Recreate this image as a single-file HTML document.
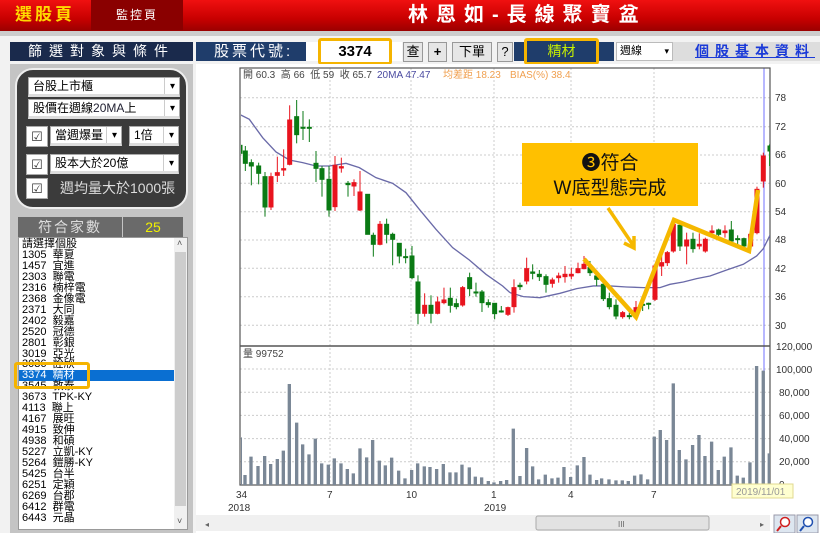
<!DOCTYPE html>
<html><head><meta charset="utf-8">
<style>
*{margin:0;padding:0;box-sizing:border-box}
body{width:820px;height:533px;overflow:hidden;background:#f2f2f2;font-family:"Liberation Sans","Noto Sans CJK TC",sans-serif;position:relative}
.a{position:absolute}
.hdr{left:0;top:0;width:820px;height:31px;background:linear-gradient(#f01010,#c80000 60%,#9a0000)}
.sel{font-size:12px;background:#fff;border:1px solid #aaa;border-bottom:3px solid #ddd;height:20px;line-height:17px;padding-left:4px;color:#000}
.sel:after{content:"▾";position:absolute;right:4px;top:0;font-size:10px}
.sel b{position:absolute;right:14px;top:0;bottom:0;border-left:1px solid #ccc}
.cb{background:#fff;border:1px solid #aaa;width:22px;height:21px;text-align:center;font-size:13px;line-height:19px;color:#333}
.btn{background:#e6e6e6;border:1px solid #999;font-size:13px;text-align:center;line-height:18px;height:20px;top:42px}
.list div{height:10.96px;line-height:11px;font-size:11px;padding-left:3px;white-space:nowrap}
</style></head><body>
<div class="a hdr"></div>
<div class="a" style="left:0;top:0;width:90px;height:30px;color:#ffd800;font-weight:bold;font-size:17px;text-align:center;line-height:30px;letter-spacing:3px">選股頁</div>
<div class="a" style="left:91px;top:0;width:92px;height:30px;background:#8a0000;color:#fff;font-size:12px;text-align:center;line-height:30px;letter-spacing:2px">監控頁</div>
<div class="a" style="left:408px;top:3px;width:260px;color:#fff;font-weight:bold;font-size:20px;line-height:24px;letter-spacing:8px">林恩如-長線聚寶盆</div>
<div class="a" style="left:0;top:31px;width:820px;height:5px;background:#ccc"></div>

<div class="a" style="left:10px;top:42px;width:183px;height:19px;background:#1a2a4c;color:#fff;font-size:14px;text-align:center;line-height:19px;letter-spacing:7px">篩選對象與條件</div>
<div class="a" style="left:196px;top:42px;width:110px;height:19px;background:#1f3d6b;color:#fff;font-size:15px;line-height:19px;padding-left:18px;letter-spacing:3px">股票代號:</div>
<div class="a" style="left:306px;top:42px;width:96px;height:19px;background:#fff"></div>
<div class="a" style="left:318px;top:38px;width:74px;height:27px;border:3px solid #f5b400;border-radius:3px;background:#fff;text-align:center;font-size:15px;font-weight:bold;line-height:21px">3374</div>
<div class="a btn" style="left:403px;width:20px">查</div>
<div class="a btn" style="left:428px;width:19px;font-weight:bold">+</div>
<div class="a btn" style="left:452px;width:40px">下單</div>
<div class="a btn" style="left:497px;width:16px">?</div>
<div class="a" style="left:514px;top:42px;width:100px;height:19px;background:#1f3d6b"></div>
<div class="a" style="left:524px;top:38px;width:75px;height:27px;border:3px solid #f5b400;border-radius:3px;background:#1f3d6b;color:#c8f000;text-align:center;font-size:14px;line-height:21px">精材</div>
<div class="a" style="left:616px;top:42px;width:57px;height:19px;background:#fff;border:1px solid #bbb;font-size:11px;line-height:16px;padding-left:3px">週線<span style="position:absolute;right:3px;font-size:9px">▾</span></div>
<div class="a" style="left:673px;top:42px;width:147px;height:19px;background:#ddd"></div>
<div class="a" style="left:695px;top:42px;color:#1a3ad8;font-size:14px;text-decoration:underline;letter-spacing:6px;line-height:19px;font-weight:bold">個股基本資料</div>

<div class="a" style="left:10px;top:64px;width:183px;height:469px;background:#c4c4c4"></div>
<div class="a" style="left:15px;top:68px;width:173px;height:141px;background:#3b3b3b;border:2px solid #eee;border-radius:18px"></div>
<div class="a sel" style="left:28px;top:77px;width:152px">台股上市櫃<b></b></div>
<div class="a sel" style="left:28px;top:99px;width:152px">股價在週線<span style="color:#223">20MA</span>上<b></b></div>
<div class="a cb" style="left:26px;top:126px">☑</div>
<div class="a sel" style="left:50px;top:126px;width:72px">當週爆量<b></b></div>
<div class="a sel" style="left:129px;top:126px;width:50px">1倍<b></b></div>
<div class="a cb" style="left:26px;top:154px">☑</div>
<div class="a sel" style="left:50px;top:154px;width:129px">股本大於20億<b></b></div>
<div class="a cb" style="left:26px;top:178px">☑</div>
<div class="a" style="left:60px;top:177px;color:#ddd;font-size:14px;line-height:22px">週均量大於1000張</div>
<div class="a" style="left:18px;top:217px;width:104px;height:20px;background:#6a6a6a;color:#ddd;font-size:14px;text-align:center;line-height:20px;letter-spacing:2px">符合家數</div>
<div class="a" style="left:123px;top:217px;width:60px;height:20px;background:#6a6a6a;color:#f0f000;font-size:14px;text-align:center;line-height:20px">25</div>
<div class="a" style="left:18px;top:237px;width:170px;height:293px;background:#fff;border:1px solid #999"></div>
<div class="a" style="left:174px;top:238px;width:13px;height:291px;background:#f0f0f0"></div>
<div class="a" style="left:175px;top:252px;width:11px;height:254px;background:#cdcdcd"></div>
<div class="a" style="left:177px;top:238px;font-size:9px;color:#555">˄</div>
<div class="a" style="left:177px;top:516px;font-size:9px;color:#555">˅</div>
<div class="a" style="left:19px;top:370px;width:155px;height:11px;background:#0a6fd2"></div>
<div class="a list" style="left:19px;top:239px;width:155px">
<div>請選擇個股</div><div>1305&nbsp; 華夏</div><div>1457&nbsp; 宜進</div><div>2303&nbsp; 聯電</div><div>2316&nbsp; 楠梓電</div><div>2368&nbsp; 金像電</div><div>2371&nbsp; 大同</div><div>2402&nbsp; 毅嘉</div><div>2520&nbsp; 冠德</div><div>2801&nbsp; 彰銀</div><div>3019&nbsp; 亞光</div><div>3036&nbsp; 詮欣</div><div style="color:#fff">3374&nbsp; 精材</div><div>3545&nbsp; 敦泰</div><div>3673&nbsp; TPK-KY</div><div>4113&nbsp; 聯上</div><div>4167&nbsp; 展旺</div><div>4915&nbsp; 致伸</div><div>4938&nbsp; 和碩</div><div>5227&nbsp; 立凱-KY</div><div>5264&nbsp; 鎧勝-KY</div><div>5425&nbsp; 台半</div><div>6251&nbsp; 定穎</div><div>6269&nbsp; 台郡</div><div>6412&nbsp; 群電</div><div>6443&nbsp; 元晶</div>
</div>
<div class="a" style="left:14px;top:362px;width:76px;height:27px;border:3px solid #f5b400;border-radius:3px"></div>

<div class="a" style="left:196px;top:64px;width:624px;height:469px;background:#fff"></div>
<svg class="a" style="left:0;top:0" width="820" height="533" viewBox="0 0 820 533">
<defs><clipPath id="cc"><rect x="241" y="68" width="529" height="417"/></clipPath></defs>
<g stroke="#ccc" stroke-dasharray="2,2" stroke-width="1">
<line x1="240" x2="770" y1="97.7" y2="97.7"/><line x1="240" x2="770" y1="126.7" y2="126.7"/><line x1="240" x2="770" y1="155" y2="155"/><line x1="240" x2="770" y1="183.3" y2="183.3"/><line x1="240" x2="770" y1="211.7" y2="211.7"/><line x1="240" x2="770" y1="240" y2="240"/><line x1="240" x2="770" y1="268.3" y2="268.3"/><line x1="240" x2="770" y1="296.7" y2="296.7"/><line x1="240" x2="770" y1="325.3" y2="325.3"/>
<line x1="240" x2="770" y1="461.8" y2="461.8"/><line x1="240" x2="770" y1="438.6" y2="438.6"/><line x1="240" x2="770" y1="415.4" y2="415.4"/><line x1="240" x2="770" y1="392.2" y2="392.2"/><line x1="240" x2="770" y1="369" y2="369"/>
<line x1="330" x2="330" y1="68" y2="485"/><line x1="411" x2="411" y1="68" y2="485"/><line x1="494" x2="494" y1="68" y2="485"/><line x1="571" x2="571" y1="68" y2="485"/><line x1="654" x2="654" y1="68" y2="485"/>
</g>
<line x1="764" x2="764" y1="68" y2="485" stroke="#7070ff" stroke-width="1"/>
<rect x="240" y="68" width="530" height="417" fill="none" stroke="#555" stroke-width="1.2"/>
<line x1="240" x2="770" y1="346" y2="346" stroke="#555" stroke-width="1.5"/>
<g font-size="10" fill="#333" font-family="Liberation Sans,sans-serif">
<text x="775" y="101">78</text><text x="775" y="130">72</text><text x="775" y="158">66</text><text x="775" y="187">60</text><text x="775" y="215">54</text><text x="775" y="243">48</text><text x="775" y="272">42</text><text x="775" y="300">36</text><text x="775" y="329">30</text>
<text x="776" y="350">120,000</text><text x="776" y="373">100,000</text><text x="779" y="396">80,000</text><text x="779" y="419">60,000</text><text x="779" y="442">40,000</text><text x="779" y="465">20,000</text><text x="779" y="488">0</text>
<text x="236" y="498">34</text><text x="228" y="511">2018</text><text x="327" y="498">7</text><text x="406" y="498">10</text><text x="491" y="498">1</text><text x="484" y="511">2019</text><text x="568" y="498">4</text><text x="651" y="498">7</text>
<text x="243" y="78" fill="#444">開 60.3&nbsp; 高 66&nbsp; 低 59&nbsp; 收 65.7</text>
<text x="377" y="78" fill="#4a4aa0">20MA 47.47</text>
<text x="443" y="78" fill="#f0a050">均差距 18.23</text>
<text x="510" y="78" fill="#f0a050">BIAS(%) 38.4</text>
<text x="243" y="357" fill="#444">量 99752</text>
</g>
<g clip-path="url(#cc)">
<path transform="translate(236,66) scale(0.3333)" d="M0,140 L40,160 L80,215 L120,258 L160,282 L200,290 L240,300 L280,300 L330,292 L370,305 L420,335 L470,352 L510,380 L550,430 L600,490 L650,545 L700,582 L750,625 L800,660 L822,680" fill="none" stroke="#6a6aa8" stroke-width="4"/>
<path transform="translate(510,66) scale(0.3333)" d="M0,680 L40,692 L90,695 L150,682 L200,668 L250,660 L300,660 L350,663 L400,665 L450,665 L480,655 L520,648 L560,638 L600,630 L650,612 L700,595 L740,570 L760,548 L780,508" fill="none" stroke="#6a6aa8" stroke-width="4"/>
<g transform="translate(236,66) scale(0.3333)" stroke-width="3">
<g fill="#0a7a14" stroke="#0a7a14">
<line x1="12" x2="12" y1="238" y2="280"/><rect x="12" y="238" width="6" height="24"/>
<line x1="28" x2="28" y1="240" y2="315"/><rect x="22" y="255" width="12" height="37"/>
<line x1="46" x2="46" y1="280" y2="358"/><rect x="40" y="290" width="12" height="10"/>
<line x1="68" x2="68" y1="290" y2="355"/><rect x="62" y="300" width="12" height="22"/>
<line x1="87" x2="87" y1="318" y2="452"/><rect x="81" y="332" width="12" height="91"/>
<line x1="182" x2="182" y1="102" y2="232"/><rect x="176" y="152" width="12" height="54"/>
<line x1="201" x2="201" y1="135" y2="222"/><rect x="195" y="184" width="12" height="3"/>
<line x1="220" x2="220" y1="160" y2="228"/><rect x="214" y="184" width="12" height="3"/>
<line x1="240" x2="240" y1="255" y2="348"/><rect x="234" y="292" width="12" height="15"/>
<line x1="258" x2="258" y1="300" y2="392"/><rect x="252" y="308" width="12" height="32"/>
<line x1="279" x2="279" y1="300" y2="452"/><rect x="273" y="340" width="12" height="92"/>
<line x1="336" x2="336" y1="345" y2="392"/><rect x="330" y="352" width="12" height="4"/>
<line x1="395" x2="395" y1="385" y2="505"/><rect x="389" y="385" width="12" height="120"/>
<line x1="412" x2="412" y1="500" y2="572"/><rect x="406" y="508" width="12" height="27"/>
<line x1="452" x2="452" y1="458" y2="532"/><rect x="446" y="475" width="12" height="30"/>
<line x1="470" x2="470" y1="500" y2="598"/><rect x="464" y="505" width="12" height="15"/>
<line x1="490" x2="490" y1="532" y2="592"/><rect x="484" y="532" width="12" height="38"/>
<line x1="509" x2="509" y1="548" y2="592"/><rect x="503" y="572" width="12" height="3"/>
<line x1="528" x2="528" y1="540" y2="640"/><rect x="522" y="570" width="12" height="65"/>
<line x1="546" x2="546" y1="628" y2="775"/><rect x="540" y="648" width="12" height="94"/>
<line x1="585" x2="585" y1="688" y2="772"/><rect x="579" y="718" width="12" height="24"/>
<line x1="643" x2="643" y1="665" y2="740"/><rect x="637" y="697" width="12" height="21"/>
<line x1="661" x2="661" y1="698" y2="730"/><rect x="655" y="713" width="12" height="9"/>
<line x1="701" x2="701" y1="620" y2="690"/><rect x="695" y="635" width="12" height="33"/>
<line x1="720" x2="720" y1="650" y2="692"/><rect x="714" y="678" width="12" height="3"/>
<line x1="738" x2="738" y1="672" y2="738"/><rect x="732" y="678" width="12" height="32"/>
<line x1="757" x2="757" y1="700" y2="725"/><rect x="751" y="710" width="12" height="6"/>
<line x1="776" x2="776" y1="712" y2="760"/><rect x="770" y="712" width="12" height="31"/>
<line x1="796" x2="796" y1="720" y2="740"/><rect x="790" y="735" width="12" height="3"/>
</g>
<g fill="#e8141e" stroke="#e8141e">
<line x1="105" x2="105" y1="320" y2="432"/><rect x="99" y="332" width="12" height="91"/>
<line x1="124" x2="124" y1="272" y2="348"/><rect x="118" y="320" width="12" height="8"/>
<line x1="143" x2="143" y1="250" y2="330"/><rect x="137" y="308" width="12" height="4"/>
<line x1="161" x2="161" y1="118" y2="298"/><rect x="155" y="162" width="12" height="133"/>
<line x1="297" x2="297" y1="270" y2="435"/><rect x="291" y="298" width="12" height="124"/>
<line x1="316" x2="316" y1="275" y2="320"/><rect x="310" y="302" width="12" height="4"/>
<line x1="354" x2="354" y1="340" y2="390"/><rect x="348" y="350" width="12" height="10"/>
<line x1="372" x2="372" y1="315" y2="435"/><rect x="366" y="378" width="12" height="54"/>
<line x1="432" x2="432" y1="465" y2="538"/><rect x="426" y="475" width="12" height="60"/>
<line x1="566" x2="566" y1="682" y2="752"/><rect x="560" y="718" width="12" height="24"/>
<line x1="605" x2="605" y1="692" y2="745"/><rect x="599" y="708" width="12" height="34"/>
<line x1="624" x2="624" y1="665" y2="715"/><rect x="618" y="702" width="12" height="8"/>
<line x1="680" x2="680" y1="660" y2="722"/><rect x="674" y="665" width="12" height="52"/>
<line x1="816" x2="816" y1="722" y2="750"/><rect x="810" y="725" width="12" height="20"/>
<line x1="834" x2="834" y1="640" y2="720"/><rect x="828" y="665" width="12" height="55"/>
</g></g>
<g transform="translate(510,66) scale(0.3333)" stroke-width="3">
<g fill="#e8141e" stroke="#e8141e">
<line x1="12" x2="12" y1="650" y2="740"/><rect x="6" y="680" width="12" height="42"/>
<line x1="50" x2="50" y1="575" y2="655"/><rect x="44" y="608" width="12" height="37"/>
<line x1="127" x2="127" y1="635" y2="665"/><rect x="121" y="642" width="12" height="10"/>
<line x1="146" x2="146" y1="620" y2="650"/><rect x="140" y="630" width="12" height="5"/>
<line x1="165" x2="165" y1="600" y2="650"/><rect x="159" y="625" width="12" height="7"/>
<line x1="184" x2="184" y1="605" y2="640"/><rect x="178" y="625" width="12" height="5"/>
<line x1="204" x2="204" y1="590" y2="622"/><rect x="198" y="608" width="12" height="12"/>
<line x1="222" x2="222" y1="570" y2="610"/><rect x="216" y="595" width="12" height="13"/>
<line x1="338" x2="338" y1="735" y2="758"/><rect x="332" y="740" width="12" height="12"/>
<line x1="378" x2="378" y1="705" y2="758"/><rect x="372" y="725" width="12" height="27"/>
<line x1="435" x2="435" y1="595" y2="705"/><rect x="429" y="600" width="12" height="100"/>
<line x1="455" x2="455" y1="570" y2="630"/><rect x="449" y="590" width="12" height="10"/>
<line x1="472" x2="472" y1="555" y2="600"/><rect x="466" y="560" width="12" height="30"/>
<line x1="490" x2="490" y1="460" y2="560"/><rect x="484" y="475" width="12" height="80"/>
<line x1="530" x2="530" y1="500" y2="595"/><rect x="524" y="522" width="12" height="18"/>
<line x1="568" x2="568" y1="502" y2="550"/><rect x="562" y="535" width="12" height="5"/>
<line x1="586" x2="586" y1="515" y2="560"/><rect x="580" y="520" width="12" height="35"/>
<line x1="606" x2="606" y1="478" y2="510"/><rect x="600" y="495" width="12" height="5"/>
<line x1="645" x2="645" y1="478" y2="515"/><rect x="639" y="495" width="12" height="5"/>
<line x1="722" x2="722" y1="500" y2="545"/><rect x="716" y="505" width="12" height="35"/>
<line x1="741" x2="741" y1="362" y2="505"/><rect x="735" y="370" width="12" height="130"/>
<line x1="760" x2="760" y1="260" y2="365"/><rect x="754" y="270" width="12" height="75"/>
</g>
<g fill="#0a7a14" stroke="#0a7a14">
<line x1="30" x2="30" y1="650" y2="672"/><rect x="24" y="658" width="12" height="4"/>
<line x1="68" x2="68" y1="595" y2="640"/><rect x="62" y="618" width="12" height="4"/>
<line x1="88" x2="88" y1="612" y2="645"/><rect x="82" y="625" width="12" height="7"/>
<line x1="108" x2="108" y1="625" y2="680"/><rect x="102" y="632" width="12" height="23"/>
<line x1="240" x2="240" y1="585" y2="630"/><rect x="234" y="605" width="12" height="15"/>
<line x1="260" x2="260" y1="625" y2="660"/><rect x="254" y="630" width="12" height="10"/>
<line x1="280" x2="280" y1="645" y2="705"/><rect x="274" y="655" width="12" height="43"/>
<line x1="298" x2="298" y1="680" y2="730"/><rect x="292" y="698" width="12" height="24"/>
<line x1="318" x2="318" y1="700" y2="760"/><rect x="312" y="718" width="12" height="32"/>
<line x1="358" x2="358" y1="740" y2="760"/><rect x="352" y="749" width="12" height="3"/>
<line x1="398" x2="398" y1="710" y2="735"/><rect x="392" y="715" width="12" height="3"/>
<line x1="416" x2="416" y1="710" y2="730"/><rect x="410" y="712" width="12" height="3"/>
<line x1="510" x2="510" y1="470" y2="555"/><rect x="504" y="478" width="12" height="62"/>
<line x1="549" x2="549" y1="500" y2="560"/><rect x="543" y="520" width="12" height="28"/>
<line x1="626" x2="626" y1="488" y2="510"/><rect x="620" y="492" width="12" height="13"/>
<line x1="664" x2="664" y1="465" y2="528"/><rect x="658" y="492" width="12" height="33"/>
<line x1="683" x2="683" y1="508" y2="540"/><rect x="677" y="518" width="12" height="3"/>
<line x1="702" x2="702" y1="515" y2="545"/><rect x="696" y="518" width="12" height="22"/>
<line x1="779" x2="779" y1="235" y2="300"/><rect x="774" y="240" width="6" height="15"/>
</g></g>
<g transform="translate(190,340) scale(0.3333)" fill="#7a8796">
<path d="M150 435V292h6v143zM160 435V405h10v30zM178 435V350h10v85zM199 435V378h10v57zM219 435V348h10v87zM237 435V372h10v63zM257 435V357h10v78zM275 435V332h10v103zM293 435V132h10v303zM315 435V248h10v187zM333 435V313h10v122zM352 435V343h10v92zM371 435V296h10v139zM390 435V370h10v65zM410 435V374h10v61zM428 435V355h10v80zM448 435V370h10v65zM467 435V387h10v48zM485 435V400h10v35zM505 435V325h10v110zM525 435V352h10v83zM543 435V300h10v135zM563 435V362h10v73zM581 435V376h10v59zM600 435V353h10v82zM621 435V392h10v43zM640 435V415h10v20zM660 435V390h10v45zM678 435V370h10v65zM698 435V379h10v56zM715 435V381h10v54zM735 435V387h10v48zM755 435V372h10v63zM775 435V397h10v38zM793 435V397h10v38zM811 435V374h10v61zM833 435V382h10v53zM851 435V410h10v25zM870 435V412h10v23zM890 435V423h10v12zM907 435V427h10v8zM927 435V423h10v12zM945 435V420h10v15zM965 435V266h10v169zM985 435V408h10v27zM1005 435V324h10v111zM1023 435V379h10v56zM1041 435V418h10v17zM1061 435V404h10v31zM1081 435V415h10v20zM1099 435V413h10v22zM1117 435V381h10v54zM1137 435V411h10v24zM1157 435V376h10v59zM1177 435V351h10v84zM1195 435V404h10v31zM1215 435V420h10v15zM1230 435V415h10v20zM1252 435V418h10v17zM1273 435V421h10v14zM1292 435V421h10v14zM1310 435V423h10v12zM1329 435V407h10v28zM1348 435V403h10v32zM1368 435V418h10v17zM1388 435V290h10v145zM1406 435V270h10v165zM1425 435V300h10v135zM1445 435V130h10v305zM1463 435V330h10v105zM1483 435V358h10v77zM1503 435V315h10v120zM1522 435V285h10v150zM1540 435V348h10v87zM1560 435V305h10v130zM1580 435V390h10v45zM1598 435V350h10v85zM1618 435V322h10v113zM1637 435V407h10v28zM1655 435V413h10v22zM1675 435V367h10v68zM1695 435V78h10v357zM1715 435V92h10v343zM1733 435V340h8v95z"/>
</g>
</g>
<polyline points="584,259 636,317 674,220 749,251 758,190" fill="none" stroke="#f5b800" stroke-width="4.5" stroke-linejoin="miter"/>
<line x1="608" y1="208" x2="633" y2="245" stroke="#f5b800" stroke-width="3.5"/>
<polyline points="624,243 634,248 634,236" fill="none" stroke="#f5b800" stroke-width="3.5"/>
<rect x="522" y="143" width="176" height="63" fill="#ffc000"/>
<text x="610" y="169" text-anchor="middle" font-size="19" fill="#111" font-family="Liberation Sans,Noto Sans CJK TC,sans-serif">❸符合</text>
<text x="610" y="194" text-anchor="middle" font-size="19" fill="#111" font-family="Liberation Sans,Noto Sans CJK TC,sans-serif">W底型態完成</text>
<rect x="732" y="484" width="61" height="14" fill="#ffffd0" stroke="#e0d890"/>
<text x="736" y="495" font-size="10" fill="#999" font-family="Liberation Sans,sans-serif">2019/11/01</text>
<rect x="196" y="515" width="574" height="16" fill="#f0f0f0"/>
<rect x="536" y="516" width="173" height="14" fill="#e2e2e2" stroke="#aaa" rx="2"/>
<text x="618" y="527" font-size="8" fill="#666">III</text>
<text x="205" y="527" font-size="8" fill="#666">◂</text>
<text x="760" y="527" font-size="8" fill="#666">▸</text>
<rect x="774" y="515" width="21" height="18" fill="#dde6f0" stroke="#99a"/>
<circle cx="785" cy="522" r="4.5" fill="#fff" stroke="#d02020" stroke-width="1.5"/><line x1="781" y1="526" x2="777" y2="531" stroke="#d02020" stroke-width="2"/>
<rect x="797" y="515" width="21" height="18" fill="#dde6f0" stroke="#99a"/>
<circle cx="808" cy="522" r="4.5" fill="#fff" stroke="#2050b0" stroke-width="1.5"/><line x1="804" y1="526" x2="800" y2="531" stroke="#2050b0" stroke-width="2"/>
</svg>
</body></html>
